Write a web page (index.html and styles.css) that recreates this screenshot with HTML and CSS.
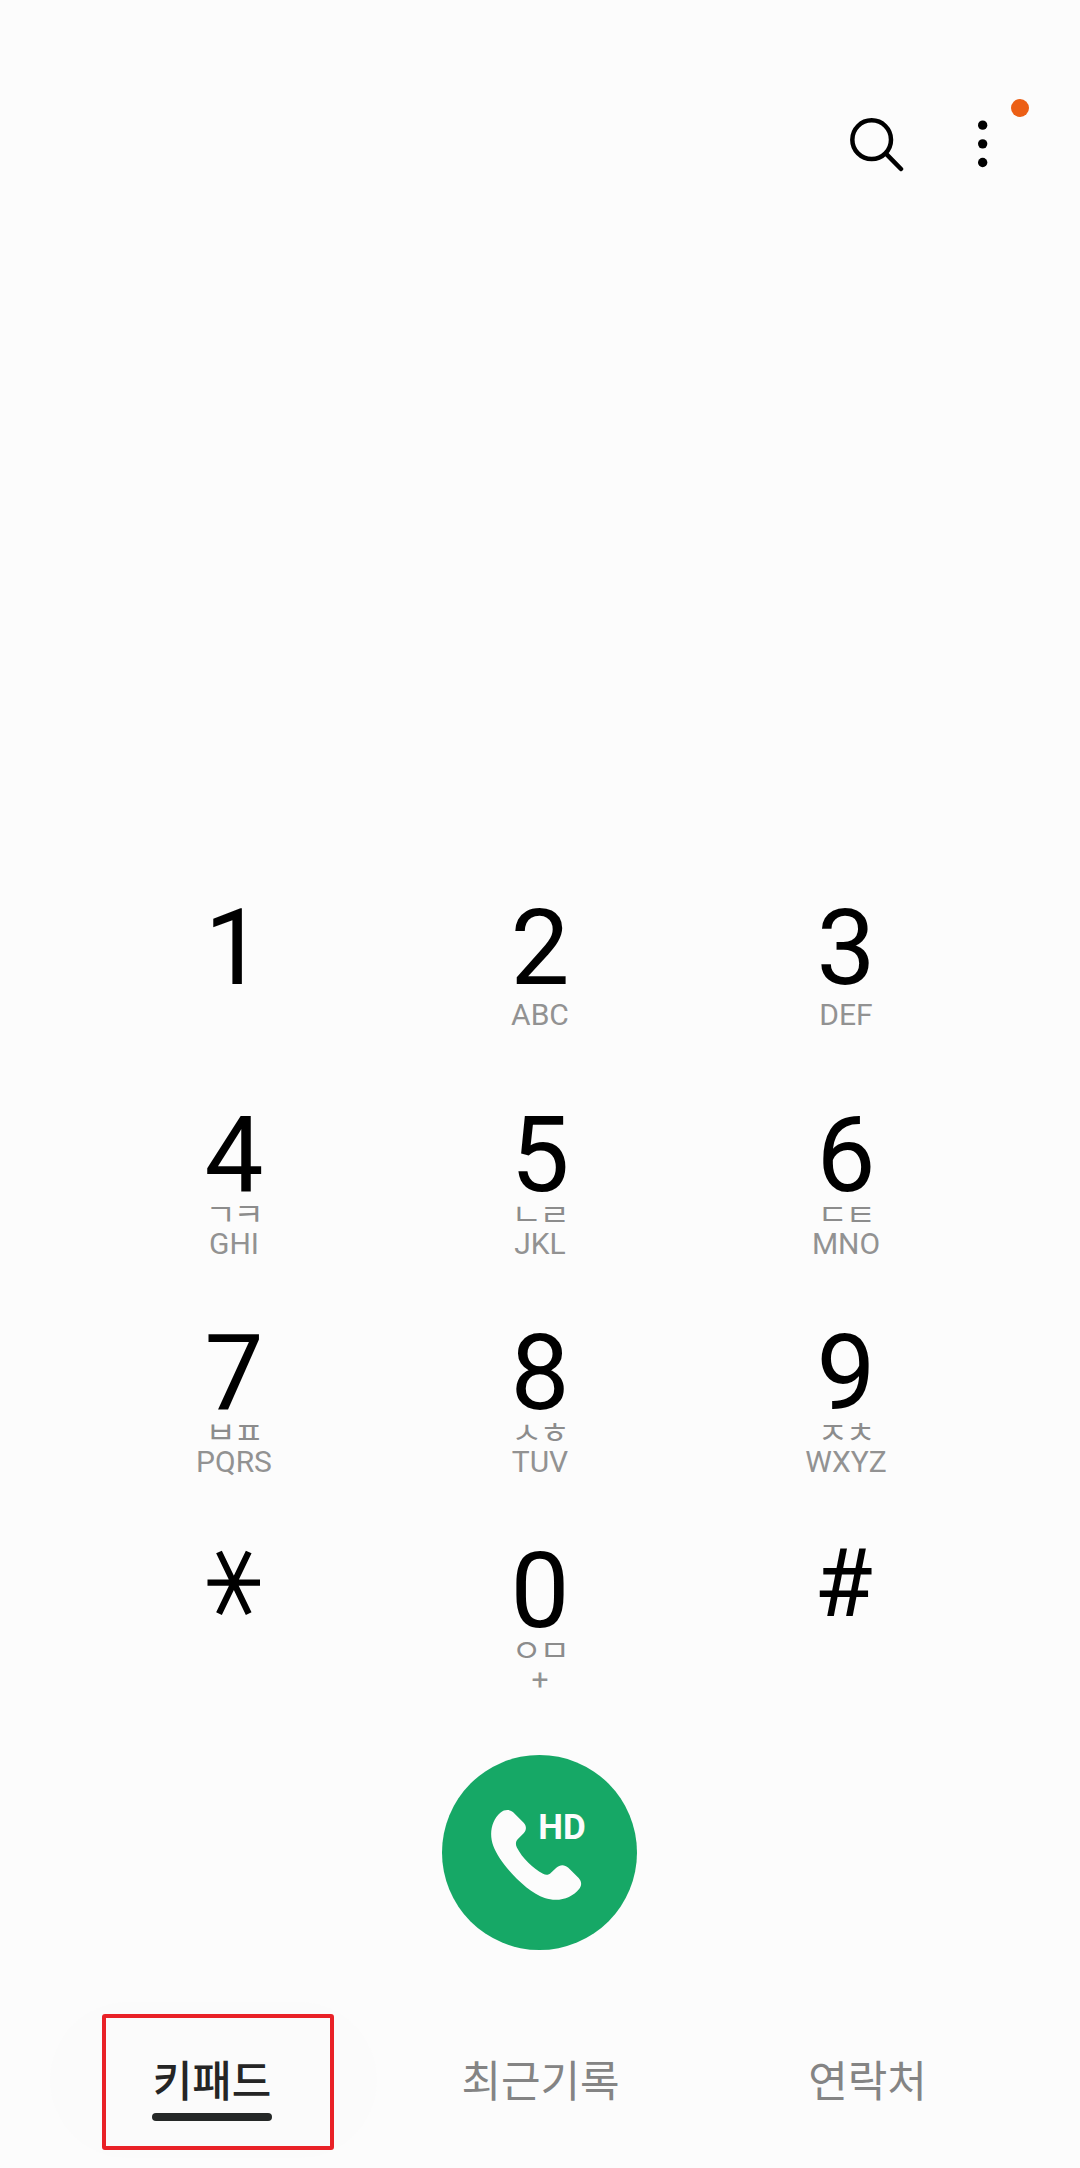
FILE: index.html
```html
<!DOCTYPE html>
<html lang="ko">
	<head>
		<meta charset="UTF-8">
		<title>키패드</title>
		<link rel="stylesheet" href="styles.css">
	</head>
	<body>
		<div class="phone">
			<div class="header">
				<svg class="search" viewBox="84 108 168 168">
					<circle cx="155" cy="179" r="58"/>
					<path d="M200 223L243 267"/>
				</svg>
				<div class="more">
					<svg viewBox="444 108 90 168">
						<circle cx="488" cy="135.500" r="14"/>
						<circle cx="488" cy="191.500" r="14"/>
						<circle cx="488" cy="247.500" r="14"/>
					</svg>
					<span class="badge"></span>
				</div>
			</div>

			<ul class="keypad">
				<li><p class="num">1</p></li>
				<li><p class="num">2</p><p class="eng">ABC</p></li>
				<li><p class="num">3</p><p class="eng">DEF</p></li>
				<li><p class="num">4</p><p class="kor">ㄱㅋ</p><p class="eng">GHI</p></li>
				<li><p class="num">5</p><p class="kor">ㄴㄹ</p><p class="eng">JKL</p></li>
				<li><p class="num">6</p><p class="kor">ㄷㅌ</p><p class="eng">MNO</p></li>
				<li><p class="num">7</p><p class="kor">ㅂㅍ</p><p class="eng">PQRS</p></li>
				<li><p class="num">8</p><p class="kor">ㅅㅎ</p><p class="eng">TUV</p></li>
				<li><p class="num">9</p><p class="kor">ㅈㅊ</p><p class="eng">WXYZ</p></li>
				<li>
					<svg class="star" viewBox="0 0 54 80">
						<path d="M0.500 39.700H53M12 9L41.700 70.700M41.700 9L12 70.700"/>
					</svg>
				</li>
				<li><p class="num">0</p><p class="kor">ㅇㅁ</p><p class="eng">+</p></li>
				<li><p class="num sharp">#</p></li>
			</ul>

			<div class="call">
				<svg viewBox="36 45 585 585">
					<path d="M232 210C241 210 248 215 254 221L281 248C290 258 290 270 281 280L263 298C257 305 256 313 261 323C277 354 308 384 339 401C348 406 356 405 363 398L379 383C390 373 404 373 415 383L446 414C455 424 456 436 448 446C425 475 385 487 344 474C290 456 211 374 190 318C176 281 185 240 211 218C218 212 225 210 232 210Z"/>
					<text x="325" y="297">HD</text>
				</svg>
			</div>

			<div class="tabs">
				<div class="tab active"><span>키패드</span><i class="mark"></i></div>
				<div class="tab"><span>최근기록</span></div>
				<div class="tab"><span>연락처</span></div>
			</div>
		</div>
	</body>
</html>
```

FILE: styles.css
```css
*{
	margin: 0;
	padding: 0;
	box-sizing: border-box;
}
ul,li{
	list-style: none;
}
svg{
	display: block;
}
body{
	background: #fcfcfc;
	font-family: Roboto, "Noto Sans CJK KR", sans-serif;
}
.phone{
	width: 1080px;
	height: 2168px;
	overflow: hidden;
	display: flex;
	flex-direction: column;
}
.header{
	height: 900px;
	padding: 116px 82px 0 0;
	display: flex;
	justify-content: flex-end;
	gap: 64px;
}
.search{
	width: 56px;
	height: 56px;
	fill: none;
	stroke: #000;
	stroke-width: 13.5;
	stroke-linecap: round;
}
.more{
	width: 30px;
	height: 56px;
	position: relative;
}
.badge{
	position: absolute;
	left: 43px;
	top: -17px;
	width: 18px;
	height: 18px;
	border-radius: 50%;
	background: #ec5f15;
}
/* keypad */
.keypad{
	width: 918px;
	height: 855px;
	margin: 0 auto;
	display: grid;
	grid-template-columns: repeat(3, 306px);
	grid-template-rows: 207px 218px 218px 212px;
	text-align: center;
}
.keypad li{
	display: flex;
	flex-direction: column;
	align-items: center;
}
.num{
	font-size: 105px;
	line-height: 98px;
	color: #000;
}
.sharp{
	padding-right: 5px;
	font-size: 95px;
	line-height: 82px;
}
.eng{
	margin-top: 3px;
	font-size: 30px;
	line-height: 28px;
	color: #929292;
}
.kor{
	height: 26px;
	margin-top: -3px;
	font-size: 30px;
	line-height: 26px;
	letter-spacing: -2px;
	color: #8c8c8c;
	transform: scaleX(1.1);
}
.kor + .eng{
	margin-top: 2px;
}
.star{
	width: 54px;
	height: 80px;
	fill: none;
	stroke: #000;
	stroke-width: 6.3;
}
/* call button */
.call{
	width: 195px;
	height: 195px;
	margin: 0 0 0 442px;
	border-radius: 50%;
	background: #16a866;
}
.call svg{
	fill: #fcfcfc;
}
.call text{
	font-size: 105px;
	font-weight: 700;
}
/* bottom tabs */
.tabs{
	margin: 52px 0 0 50px;
	width: 981px;
	display: flex;
}
.tab{
	width: 327px;
	height: 156px;
	padding-top: 46px;
	display: flex;
	flex-direction: column;
	align-items: center;
	position: relative;
	font-family: "Noto Sans CJK KR", sans-serif;
	font-size: 43px;
	line-height: 60px;
	color: #848484;
}
.active{
	padding-right: 3px;
	border-radius: 78px;
	background: #fbfbfb;
	color: #252525;
	font-weight: 500;
}
.mark{
	width: 120px;
	height: 8px;
	margin-top: 5px;
	border-radius: 4px;
	background: #252827;
}
/* red frame round the current tab */
.active::after{
	content: "";
	position: absolute;
	box-sizing: border-box;
	left: 52px;
	top: 12px;
	width: 232px;
	height: 136px;
	border: 4px solid #e92127;
	border-radius: 3px;
}
```
